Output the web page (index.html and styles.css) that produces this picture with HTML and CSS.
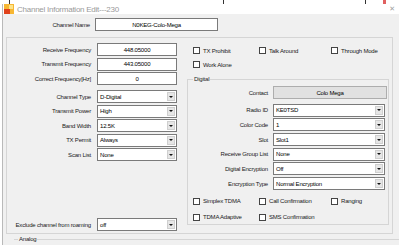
FILE: index.html
```html
<!DOCTYPE html>
<html>
<head>
    <title>Channel Information Edit</title>
    <link rel="stylesheet" href="styles.css">
</head>
<body>
    <div class="backdrop">
        <span class="tick t1"></span>
        <span class="tick t2"></span>
        <span class="tick t3"></span>
        <span class="tick t4"></span>
    </div>
    <div class="window">
        <div class="titlebar">
            <svg class="app-icon" width="10" height="10" viewBox="0 0 10 10">
                <rect x="0" y="0" width="10" height="10" fill="#f7b733"/>
                <rect x="0" y="5" width="6" height="5" fill="#e0421c"/>
                <rect x="5" y="1" width="4" height="4" fill="#fde48a"/>
            </svg>
            <span class="title">Channel Information Edit---230</span>
            <span class="close">✕</span>
        </div>

        <div class="client">
            <div class="name-row">
                <label class="name-label">Channel Name</label>
                <div class="field name-field">N0KEG-Colo-Mega</div>
            </div>

            <div class="group main">
                <div class="left">
                    <div class="row">
                        <label>Receive Frequency</label>
                        <div class="field center">448.05000</div>
                    </div>
                    <div class="row">
                        <label>Transmit Frequency</label>
                        <div class="field center">443.05000</div>
                    </div>
                    <div class="row">
                        <label>Correct Frequency[Hz]</label>
                        <div class="field center">0</div>
                    </div>

                    <div class="row first-combo">
                        <label>Channel Type</label>
                        <div class="combo"><span>D-Digital</span><i class="drop"></i></div>
                    </div>
                    <div class="row">
                        <label>Transmit Power</label>
                        <div class="combo"><span>High</span><i class="drop"></i></div>
                    </div>
                    <div class="row">
                        <label>Band Width</label>
                        <div class="combo"><span>12.5K</span><i class="drop"></i></div>
                    </div>
                    <div class="row">
                        <label>TX Permit</label>
                        <div class="combo"><span>Always</span><i class="drop"></i></div>
                    </div>
                    <div class="row">
                        <label>Scan List</label>
                        <div class="combo"><span>None</span><i class="drop"></i></div>
                    </div>

                    <div class="row exclude">
                        <label>Exclude channel from roaming</label>
                        <div class="combo"><span>off</span><i class="drop"></i></div>
                    </div>
                </div>

                <div class="right">
                    <div class="checks">
                        <span class="check c1"><i></i>TX Prohibit</span>
                        <span class="check c2"><i></i>Talk Around</span>
                        <span class="check c3"><i></i>Through Mode</span>
                    </div>
                    <div class="checks">
                        <span class="check c1"><i></i>Work Alone</span>
                    </div>

                    <fieldset class="digital">
                        <legend>Digital</legend>
                        <div class="drow">
                            <label>Contact</label>
                            <div class="button">Colo Mega</div>
                        </div>
                        <div class="drow gap">
                            <label>Radio ID</label>
                            <div class="combo"><span>KE0TSD</span><i class="drop"></i></div>
                        </div>
                        <div class="drow">
                            <label>Color Code</label>
                            <div class="combo"><span>1</span><i class="drop"></i></div>
                        </div>
                        <div class="drow">
                            <label>Slot</label>
                            <div class="combo"><span>Slot1</span><i class="drop"></i></div>
                        </div>
                        <div class="drow">
                            <label>Receive Group List</label>
                            <div class="combo"><span>None</span><i class="drop"></i></div>
                        </div>
                        <div class="drow">
                            <label>Digital Encryption</label>
                            <div class="combo"><span>Off</span><i class="drop"></i></div>
                        </div>
                        <div class="drow">
                            <label>Encryption Type</label>
                            <div class="combo"><span>Normal Encryption</span><i class="drop"></i></div>
                        </div>

                        <div class="checks dchecks">
                            <span class="check c1"><i></i>Simplex TDMA</span>
                            <span class="check c2"><i></i>Call Confirmation</span>
                            <span class="check c3"><i></i>Ranging</span>
                        </div>
                        <div class="checks">
                            <span class="check c1"><i></i>TDMA Adaptive</span>
                            <span class="check c2"><i></i>SMS Confirmation</span>
                        </div>
                    </fieldset>
                </div>
            </div>

            <fieldset class="analog">
                <legend>Analog</legend>
            </fieldset>
        </div>
    </div>
</body>
</html>
```

FILE: styles.css
```css
* {
    margin: 0;
    padding: 0;
    box-sizing: border-box;
}

html, body {
    width: 100%;
    height: 100%;
    overflow: hidden;
}

body {
    background-color: #ffffff;
    font-family: "Liberation Sans", Arial, sans-serif;
    font-size: 6px;
    letter-spacing: -0.2px;
    color: #1a1a1a;
    white-space: nowrap;
}

/* window behind the dialog */
.backdrop {
    height: 4px;
    display: flex;
    background-color: #ffffff;
}

.tick {
    height: 4px;
    border-left: 1px solid #333333;
}

.t1 { margin-left: 9px; }
.t2 { margin-left: 213px; }
.t3 { margin-left: 141px; }
.t4 { margin-left: 17px; border-left: 3px solid #e06060; }

.window {
    margin-left: 2px;
    border-left: 1px solid #b9b9b9;
    height: 241px;
    display: flex;
    flex-direction: column;
}

.titlebar {
    height: 14px;
    display: flex;
    align-items: center;
    background-color: #ffffff;
    padding-left: 1px;
}

.app-icon {
    flex: none;
}

.title {
    margin-left: 3px;
    font-size: 8px;
    letter-spacing: -0.25px;
    color: #9a9a9a;
}

.close {
    margin-left: auto;
    margin-right: 4px;
    font-family: "DejaVu Sans", sans-serif;
    font-size: 7px;
    color: #a0a0a0;
}

.client {
    flex: 1;
    background-color: #f0f0f0;
    padding: 4px 0 0 3px;
}

.name-row {
    display: flex;
    align-items: center;
    height: 13px;
}

.name-label {
    width: 84px;
    text-align: right;
}

.field {
    height: 13px;
    background-color: #ffffff;
    border: 1px solid #7a7a7a;
    display: flex;
    align-items: center;
    color: #000000;
}

.name-field {
    width: 123px;
    margin-left: 5px;
    justify-content: center;
}

.center {
    justify-content: center;
}

.group {
    border: 1px solid #d5d5d5;
}

.main {
    margin-top: 6px;
    width: 387px;
    height: 197px;
    display: flex;
    padding-top: 5px;
}

.left {
    width: 180px;
    display: flex;
    flex-direction: column;
    gap: 1.5px;
}

.row {
    display: flex;
    align-items: center;
    height: 13px;
}

.row label {
    width: 84px;
    text-align: right;
    flex: none;
}

.row .field,
.row .combo {
    margin-left: 6px;
    width: 80px;
}

.first-combo {
    margin-top: 3.5px;
}

.exclude {
    margin-top: auto;
    margin-bottom: 2px;
}

.combo {
    height: 13px;
    background-color: #ffffff;
    border: 1px solid #7a7a7a;
    display: flex;
    align-items: stretch;
    color: #000000;
}

.combo span {
    flex: 1;
    padding-left: 2px;
    display: flex;
    align-items: center;
}

.drop {
    width: 8px;
    margin: 1px;
    background-color: #e6e6e6;
    border: 1px solid #cfcfcf;
    display: flex;
    align-items: center;
    justify-content: center;
}

.drop::after {
    content: "";
    border-left: 2px solid transparent;
    border-right: 2px solid transparent;
    border-top: 2px solid #111111;
}

.right {
    flex: 1;
    display: flex;
    flex-direction: column;
}

.checks {
    display: flex;
    align-items: center;
    height: 9px;
    margin-top: 3px;
}

.checks + .checks {
    margin-top: 5px;
}

.check {
    display: flex;
    align-items: center;
    gap: 3px;
}

.check i {
    width: 7px;
    height: 7px;
    background-color: #ffffff;
    border: 1px solid #444444;
}

.check.c1 { margin-left: 6px; width: 66px; }
.check.c2 { width: 72px; }

.digital {
    margin-top: 6px;
    width: 202px;
    height: 150px;
    border: 1px solid #d5d5d5;
    padding-top: 2px;
    display: flex;
    flex-direction: column;
    gap: 1.7px;
}

.digital legend {
    margin-left: 5px;
    padding: 0 1px;
    line-height: 9px;
}

.drow {
    display: flex;
    align-items: center;
    height: 13px;
}

.drow.gap {
    margin-top: 3px;
}

.drow label {
    width: 80px;
    text-align: right;
    flex: none;
}

.drow .combo {
    margin-left: 5px;
    width: 112px;
}

.button {
    margin-left: 5px;
    width: 114px;
    height: 13px;
    background-color: #e1e1e1;
    border: 1px solid #adadad;
    display: flex;
    align-items: center;
    justify-content: center;
    color: #000000;
}

.dchecks {
    margin-top: 5px;
}

.digital .check.c1 { margin-left: 5px; }

.analog {
    margin: 1px 0 0 8px;
    border: none;
    border-top: 1px solid #d5d5d5;
    height: 10px;
}

.analog legend {
    margin-left: 4px;
    padding: 0 1px;
    line-height: 9px;
}
```
